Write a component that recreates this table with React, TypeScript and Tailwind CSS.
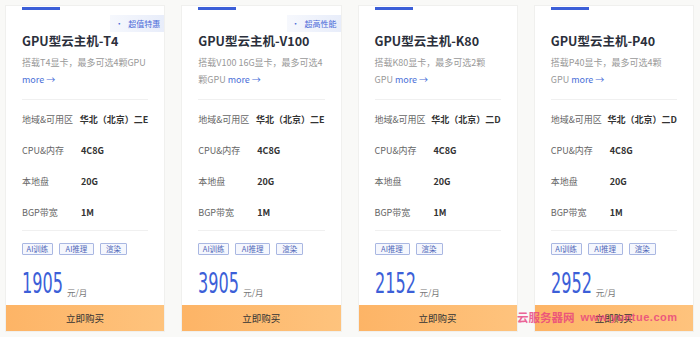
import React from "react";

type Card = {
  title: string;
  badge?: string;
  desc1: string;
  desc2: string;
  zone: string;
  tags: { t: string; w: string }[];
  price: string;
};

const cards: Card[] = [
  {
    title: "GPU型云主机-T4",
    badge: "超值特惠",
    desc1: "搭载T4显卡，最多可选4颗GPU",
    desc2: "",
    zone: "华北（北京）二E",
    tags: [
      { t: "AI训练", w: "w-[31px]" },
      { t: "AI推理", w: "w-[35px]" },
      { t: "渲染", w: "w-[27px]" },
    ],
    price: "1905",
  },
  {
    title: "GPU型云主机-V100",
    badge: "超高性能",
    desc1: "搭载V100 16G显卡，最多可选4",
    desc2: "颗GPU",
    zone: "华北（北京）二E",
    tags: [
      { t: "AI训练", w: "w-[31px]" },
      { t: "AI推理", w: "w-[35px]" },
      { t: "渲染", w: "w-[27px]" },
    ],
    price: "3905",
  },
  {
    title: "GPU型云主机-K80",
    desc1: "搭载K80显卡，最多可选2颗",
    desc2: "GPU",
    zone: "华北（北京）二D",
    tags: [
      { t: "AI推理", w: "w-[35px]" },
      { t: "渲染", w: "w-[27px]" },
    ],
    price: "2152",
  },
  {
    title: "GPU型云主机-P40",
    desc1: "搭载P40显卡，最多可选4颗",
    desc2: "GPU",
    zone: "华北（北京）二D",
    tags: [
      { t: "AI训练", w: "w-[31px]" },
      { t: "AI推理", w: "w-[35px]" },
      { t: "渲染", w: "w-[27px]" },
    ],
    price: "2952",
  },
];

const font = "font-['Noto_Sans_CJK_SC','Noto_Sans',sans-serif]";

function More() {
  return <span className="text-[#4a6fd8]">more →</span>;
}

function ProductCard({ c }: { c: Card }) {
  const rows: [string, string][] = [
    ["地域&可用区", c.zone],
    ["CPU&内存", "4C8G"],
    ["本地盘", "20G"],
    ["BGP带宽", "1M"],
  ];
  return (
    <div className="relative flex h-[327px] flex-col border border-[#f0f0ee] bg-white">
      <div className="ml-4 mt-[1px] h-[3px] w-[38px] bg-[#3c5fd8]" />
      {c.badge && (
        <div className="absolute right-0 top-[9px] flex h-[17px] items-center whitespace-nowrap bg-gradient-to-r from-[#f6f8fd] to-[#e8edfa] pl-[5px] pr-[4px] text-[8px] leading-none text-[#4a6ad8]">
          <span className="mr-[5px]">·</span>
          <span>{c.badge}</span>
        </div>
      )}
      <div className="px-4">
        <div className="mt-[22px] text-[12.5px] font-bold leading-[18px] text-[#2b2f3b] whitespace-nowrap">
          {c.title}
        </div>
        <div className="mt-[5px] text-[9px] leading-[16.5px] text-[#999] whitespace-nowrap">
          <div>{c.desc1}</div>
          <div>
            {c.desc2 && <span>{c.desc2} </span>}
            <More />
          </div>
        </div>
        <div className="mt-[11px] h-px bg-[#f0f0f0]" />
        <div className="mt-[4px]">
          {rows.map(([k, v]) => (
            <div key={k} className="flex h-[31px] items-center text-[9px] whitespace-nowrap">
              <span className="w-[59px] text-[#666]">{k}</span>
              <span className="font-bold text-[#333]">{v}</span>
            </div>
          ))}
        </div>
        <div className="mt-[2px] h-px bg-[#f0f0f0]" />
        <div className="mt-[12px] flex gap-[6px]">
          {c.tags.map((t) => (
            <span
              key={t.t}
              className={`${t.w} flex h-[12px] items-center justify-center rounded-[1px] border border-[#a9b7e2] bg-[#f5f7fd] text-[7.5px] leading-none text-[#4e66b8] whitespace-nowrap`}
            >
              {t.t}
            </span>
          ))}
        </div>
        <div className="mt-[15px] flex h-[28px] items-end">
          <div className="w-[45px] shrink-0 overflow-visible">
            <span className="inline-block origin-left scale-x-[0.64] font-['Liberation_Sans_Narrow','DejaVu_Sans_Condensed',sans-serif] text-[28px] leading-none text-[#3c5fd8] whitespace-nowrap">
              {c.price}
            </span>
          </div>
          <span className="mb-[2px] text-[8.5px] leading-none text-[#777]">元/月</span>
        </div>
      </div>
      <div className="mt-auto flex h-[26px] items-center justify-center bg-gradient-to-r from-[#fdb466] to-[#fec37d] text-[9.5px] text-[#333]">
        立即购买
      </div>
    </div>
  );
}

export default function App() {
  return (
    <div className={`relative h-[337px] w-[700px] overflow-hidden bg-[#f9f9f7] ${font}`}>
      <div className="grid grid-cols-4 gap-4 pl-[5px] pr-[6px] pt-[5px]">
        {cards.map((c) => (
          <ProductCard key={c.title} c={c} />
        ))}
      </div>
      <div className="absolute left-[517px] top-[309px] flex items-center gap-[6px] whitespace-nowrap text-[#e8407e] opacity-80">
        <span className="text-[11.5px] font-bold">云服务器网</span>
        <span className="font-['Liberation_Sans',sans-serif] text-[11px] font-bold tracking-[0.5px]">www.yuntue.com</span>
      </div>
    </div>
  );
}
